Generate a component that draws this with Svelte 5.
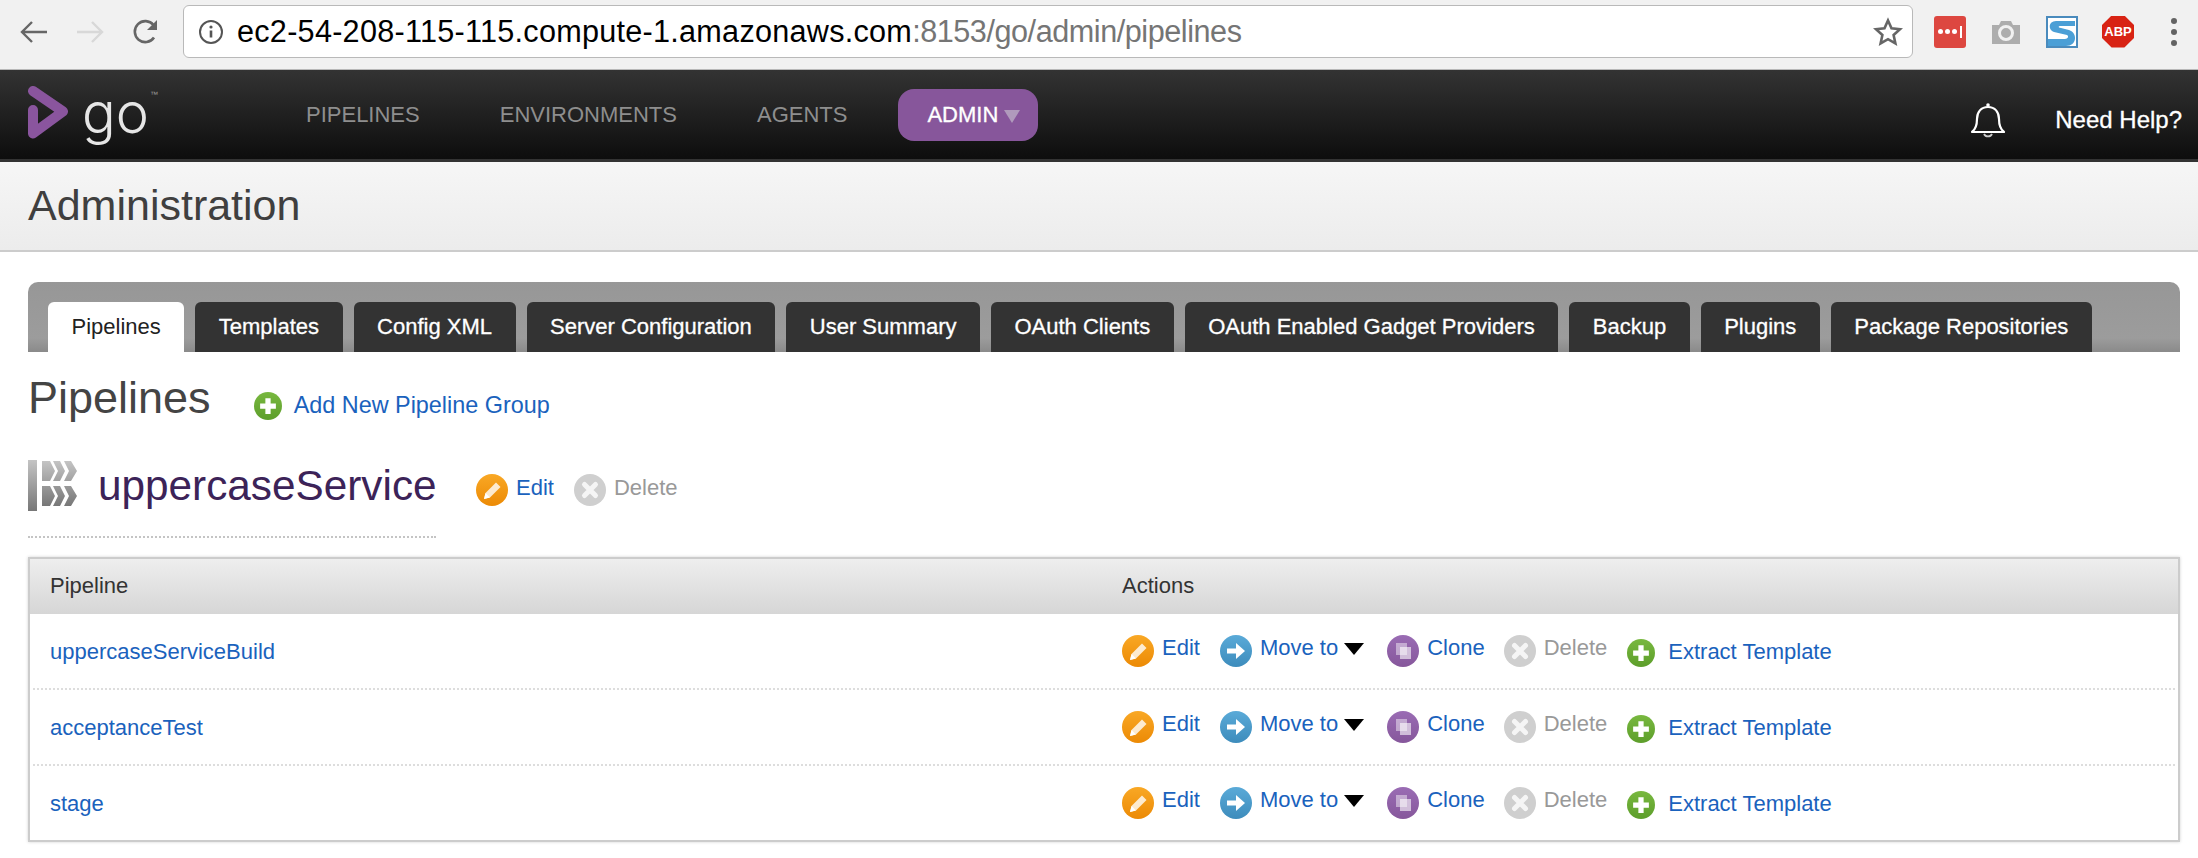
<script>
  const tabs = ['Pipelines','Templates','Config XML','Server Configuration','User Summary','OAuth Clients','OAuth Enabled Gadget Providers','Backup','Plugins','Package Repositories'];
  const rows = ['uppercaseServiceBuild','acceptanceTest','stage'];
</script>

{#snippet glyph(kind)}
  <span class="ico {kind}">
    <svg viewBox="0 0 32 32" aria-hidden="true">
      {#if kind === 'edit'}
        <path d="M8 25 l1.500-6 L20 8.500 l4.500 4.500 L14 23.500z" fill="#fff" opacity=".8"/>
        <path d="M8 25 l1.500-6 4.500 4.500z" fill="#fff"/>
      {:else if kind === 'move'}
        <path d="M7 13.500h9V8l9 8-9 8v-5.500H7z" fill="#fff"/>
      {:else if kind === 'clone'}
        <rect x="9" y="8" width="11" height="12" fill="#fff" opacity=".45"/>
        <rect x="13" y="12" width="11" height="12" fill="#fff" opacity=".6"/>
      {:else if kind === 'del'}
        <path d="M10.500 10.500 L21.500 21.500 M21.500 10.500 L10.500 21.500" stroke="#fff" stroke-width="5" stroke-linecap="round" opacity=".8"/>
      {:else}
        <path d="M16 7v18M7 16h18" stroke="#fff" stroke-width="6"/>
      {/if}
    </svg>
  </span>
{/snippet}

<div class="page">
  <div class="browser">
    <div class="navs">
      <svg width="30" height="28" viewBox="0 0 30 28"><path d="M28 14H4M13 4 3 14l10 10" fill="none" stroke="#666" stroke-width="2.400"/></svg>
      <svg width="30" height="28" viewBox="0 0 30 28"><path d="M2 14h24M17 4l10 10-10 10" fill="none" stroke="#d8d8d8" stroke-width="2.400"/></svg>
      <svg width="30" height="28" viewBox="0 0 30 28"><path d="M23 19.500A10.500 10.500 0 1 1 22.500 7" fill="none" stroke="#666" stroke-width="2.600"/><path d="M26 2v10H16z" fill="#666"/></svg>
    </div>
    <div class="url">
      <svg class="info" width="26" height="26" viewBox="0 0 26 26"><circle cx="13" cy="13" r="11" fill="none" stroke="#555" stroke-width="2"/><path d="M13 11.500v7" stroke="#555" stroke-width="2.600"/><circle cx="13" cy="8" r="1.600" fill="#555"/></svg>
      <span class="addr"><b>ec2-54-208-115-115.compute-1.amazonaws.com</b><span>:8153/go/admin/pipelines</span></span>
      <svg class="star" width="30" height="30" viewBox="0 0 30 30"><path d="M15 3.500l3.500 7.900 8.500.9-6.400 5.700 1.800 8.400L15 22.200l-7.400 4.200 1.800-8.400L3 12.300l8.500-.9z" fill="none" stroke="#666" stroke-width="2.600" stroke-linejoin="miter"/></svg>
    </div>
    <div class="exts">
      <span class="lastpass"><i></i><i></i><i></i><em></em></span>
      <svg width="30" height="28" viewBox="0 0 30 28"><path d="M1 7h7l2-4h10l2 4h7v19H1z" fill="#adadad"/><circle cx="15" cy="15" r="6.500" fill="none" stroke="#f1f1f1" stroke-width="3"/></svg>
      <svg width="32" height="32" viewBox="0 0 32 32"><rect width="32" height="32" fill="#4a8bbd"/><rect x="2" y="2" width="28" height="28" fill="#fff"/><path d="M29 5H10C2 5 2 14 8 16l13 3c2 1 1 4-2 4H2v7h18c11 0 12-13 3-16L13 11.500c-1-1 0-1.500 2-1.500h14z" fill="#4b9fd6"/></svg>
      <span class="abp">ABP</span>
      <span class="dots"><i></i><i></i><i></i></span>
    </div>
  </div>

  <header class="top">
    <div class="logo">
      <svg width="42" height="54" viewBox="0 0 42 54"><path d="M5 5 L35 25.500 L5 47.500 V24" fill="none" stroke="#8a559e" stroke-width="10" stroke-linejoin="round" stroke-linecap="round"/></svg>
      <span class="go">go</span><span class="tm">™</span>
    </div>
    <nav>
      <span>PIPELINES</span>
      <span>ENVIRONMENTS</span>
      <span>AGENTS</span>
      <span class="admin">ADMIN<i></i></span>
    </nav>
    <div class="right">
      <svg width="36" height="38" viewBox="0 0 36 38"><path d="M2 31c4-3 5-7 5-13 0-7 4-12 11-12s11 5 11 12c0 6 1 10 5 13z" fill="none" stroke="#fff" stroke-width="2.200" stroke-linejoin="round"/><circle cx="18" cy="4" r="1.800" fill="#fff"/><path d="M14 33a4.500 4.500 0 0 0 8 0" fill="none" stroke="#ccc" stroke-width="1.800"/></svg>
      <span class="help">Need Help?</span>
    </div>
  </header>

  <div class="sub"><h1>Administration</h1></div>

  <main>
    <div class="tabs">
      {#each tabs as t, i}
        <span class="tab" class:on={i === 0}>{t}</span>
      {/each}
    </div>

    <div class="title">
      <h2>Pipelines</h2>
      {@render glyph('add')}
      <a href="#a">Add New Pipeline Group</a>
    </div>

    <div class="group">
      <div class="gname">
        <svg class="gicon" width="50" height="52" viewBox="0 0 50 52">
          <defs><linearGradient id="gv" x1="0" y1="0" x2="0" y2="1"><stop offset="0" stop-color="#c4c4c4"/><stop offset="1" stop-color="#777"/></linearGradient></defs>
          <rect width="9" height="51" fill="url(#gv)"/>
          <path d="M14 1h8l5 10-5 10h-8zM25 1h7l5 10-5 10h-7l5-10zM36 1h7l6 10-6 10h-7l5-10zM14 26h8l5 10-5 10h-8zM25 26h7l5 10-5 10h-7l5-10zM36 26h7l6 10-6 10h-7l5-10z" fill="url(#gv)"/>
        </svg>
        <span>uppercaseService</span>
      </div>
      <div class="gact">
        {@render glyph('edit')}<a href="#e">Edit</a>
        {@render glyph('del')}<span class="off">Delete</span>
      </div>
    </div>

    <div class="table">
      <div class="thead"><span class="c1">Pipeline</span><span>Actions</span></div>
      {#each rows as r}
        <div class="row">
          <a class="c1 pname" href="#p">{r}</a>
          <div class="acts">
            <span class="act">{@render glyph('edit')}<a href="#e">Edit</a></span>
            <span class="act">{@render glyph('move')}<a href="#m">Move to</a><i class="caret"></i></span>
            <span class="act cl">{@render glyph('clone')}<a href="#c">Clone</a></span>
            <span class="act">{@render glyph('del')}<span class="off">Delete</span></span>
            <span class="act ext">{@render glyph('add')}<a href="#x">Extract Template</a></span>
          </div>
        </div>
      {/each}
    </div>
  </main>
</div>

<style>
  :global(body) { margin: 0; background: #fff; }
  .page { width: 2198px; height: 858px; overflow: hidden; font-family: "Liberation Sans", Arial, sans-serif; font-size: 22px; color: #333; }
  a { color: #1a62bd; text-decoration: none; }

  .browser { height: 69px; background: #f1f1f1; border-bottom: 1px solid #b8b8b8; display: flex; align-items: center; }
  .navs { display: flex; align-items: center; gap: 26px; padding-left: 19px; width: 183px; flex: none; box-sizing: border-box; margin-top: -6px; }
  .url { width: 1730px; height: 53px; box-sizing: border-box; background: #fff; border: 1px solid #b9b9b9; border-radius: 6px; display: flex; align-items: center; padding: 0 9px 0 14px; margin-top: -6px; flex: none; }
  .info { margin-right: 13px; flex: none; }
  .addr { font-size: 30.600px; color: #757575; flex: 1; white-space: nowrap; letter-spacing: -.45px; }
  .addr b { color: #000; font-weight: 400; letter-spacing: .27px; }
  .exts { display: flex; align-items: center; margin-left: 21px; margin-top: -6px; }
  .lastpass { width: 32px; height: 32px; background: #dd4740; border-radius: 3px; display: flex; align-items: center; justify-content: center; gap: 2px; }
  .lastpass i { width: 5px; height: 5px; border-radius: 50%; background: #fff; }
  .lastpass em { width: 1.500px; height: 12px; background: #fff; margin-left: 1px; }
  .exts svg:nth-child(2) { margin-left: 25px; }
  .exts svg:nth-child(3) { margin-left: 25px; }
  .abp { width: 32px; height: 32px; margin-left: 24px; background: #d82314; color: #fff; font-size: 13px; font-weight: 700; display: flex; align-items: center; justify-content: center; clip-path: polygon(30% 0, 70% 0, 100% 30%, 100% 70%, 70% 100%, 30% 100%, 0 70%, 0 30%); }
  .dots { display: flex; flex-direction: column; gap: 5px; margin-left: 37px; }
  .dots i { width: 6px; height: 6px; border-radius: 50%; background: #636363; }

  .top { height: 92px; box-sizing: border-box; background: linear-gradient(#333, #0d0d0d 97%, #333 97%); display: flex; align-items: center; padding: 0 16px 0 28px; }
  .logo { width: 278px; flex: none; display: flex; align-items: flex-start; height: 54px; margin-top: -6px; }
  .go { font-family: Inter, sans-serif; font-weight: 300; font-size: 56px; line-height: 54px; color: #e6e6e6; margin-left: 12px; letter-spacing: 0; }
  .tm { font-size: 8px; color: #999; margin: 4px 0 0 1px; }
  nav { display: flex; align-items: center; gap: 80px; color: #8e8e8e; font-size: 22px; margin-top: -2px; }
  .admin { margin-left: -29px; width: 140px; height: 52px; box-sizing: border-box; padding-left: 29px; border-radius: 16px; background: #87569b; color: #fff; display: flex; align-items: center; gap: 6px; -webkit-text-stroke: .3px #fff; }
  .admin i { width: 0; height: 0; border: 8px solid transparent; border-top: 13px solid #b09abc; border-bottom: 0; margin-top: 3px; }
  .right { margin-left: auto; display: flex; align-items: center; gap: 49px; color: #fff; margin-top: 8px; }
  .help { font-size: 24px; -webkit-text-stroke: .3px #fff; }

  .sub { height: 90px; box-sizing: border-box; background: linear-gradient(#f6f6f6, #ececec); border-bottom: 2px solid #ccc; padding-left: 28px; display: flex; align-items: center; }
  h1 { margin: 0 0 2px; font-size: 43px; font-weight: 400; color: #3f3f3f; }

  main { padding: 30px 18px 0 28px; }
  .tabs { height: 70px; box-sizing: border-box; border-radius: 10px 10px 0 0; background: linear-gradient(#979797, #9c9c9c 80%, #8a8a8a); padding: 20px 0 0 20px; display: flex; gap: 11px; }
  .tab { height: 50px; box-sizing: border-box; padding: 0 23.500px; border-radius: 6px 6px 0 0; background: #333; color: #fff; display: flex; align-items: center; white-space: nowrap; -webkit-text-stroke: .3px #fff; }
  .tab.on { background: #fff; color: #222; -webkit-text-stroke: 0; }

  .title { display: flex; align-items: center; height: 70px; margin-top: 11px; font-size: 23.400px; }
  h2 { margin: 0 44px 0 0; font-size: 45px; font-weight: 400; color: #444; }
  .title .ico { width: 28px; height: 28px; margin: 15px 12px 0 -1px; }
  .title a { margin-top: 14px; }

  .group { display: flex; align-items: flex-start; margin-top: 27px; height: 97px; }
  .gname { width: 408px; height: 78px; box-sizing: border-box; border-bottom: 2px dotted #c4c4c4; display: flex; gap: 20px; font-size: 42.300px; color: #3c2358; }
  .gname span { margin-top: 2px; }
  .gicon { filter: blur(.6px); flex: none; }
  .gact { display: flex; align-items: flex-start; margin: 14px 0 0 40px; line-height: 28px; }
  .gact .ico { margin-right: 8px; }
  .gact a { margin-right: 20px; }

  .ico { display: inline-flex; flex: none; width: 32px; height: 32px; border-radius: 50%; filter: blur(.4px); }
  .ico svg { width: 100%; height: 100%; }
  .edit { background: linear-gradient(#f9a825, #ec8a05); }
  .move { background: linear-gradient(#5aaad8, #3d8cbc); }
  .clone { background: linear-gradient(#9a6cb4, #86579b); }
  .del { background: #cfcfcf; }
  .add { background: linear-gradient(#78b83f, #5d9e2b); width: 28px; height: 28px; }
  .off { color: #999; }

  .table { border: 2px solid #ccc; height: 285px; box-sizing: border-box; box-shadow: 0 0 3px rgba(0,0,0,.18); }
  .thead { height: 55px; box-sizing: border-box; background: linear-gradient(#eee, #d6d6d6); display: flex; align-items: center; color: #333; padding-bottom: 2px; }
  .c1 { width: 1092px; padding-left: 20px; box-sizing: border-box; flex: none; }
  .row { height: 76px; box-sizing: border-box; display: flex; border-bottom: 2px dotted #ddd; margin: 0 3px; }
  .row:last-child { border-bottom: 0; }
  .row .c1 { width: 1089px; padding-left: 17px; }
  .pname { line-height: 26px; margin-top: 25px; height: 26px; }
  .acts { display: flex; align-items: flex-start; gap: 20px; padding-top: 21px; line-height: 26px; }
  .act { display: flex; align-items: flex-start; gap: 8px; white-space: nowrap; }
  .cl { margin: 0 -1px 0 3px; }
  .ext { margin-top: 4px; gap: 13px; }
  .caret { width: 0; height: 0; border: 10px solid transparent; border-top: 12px solid #000; border-bottom: 0; margin: 8px 0 0 -2px; }
</style>
